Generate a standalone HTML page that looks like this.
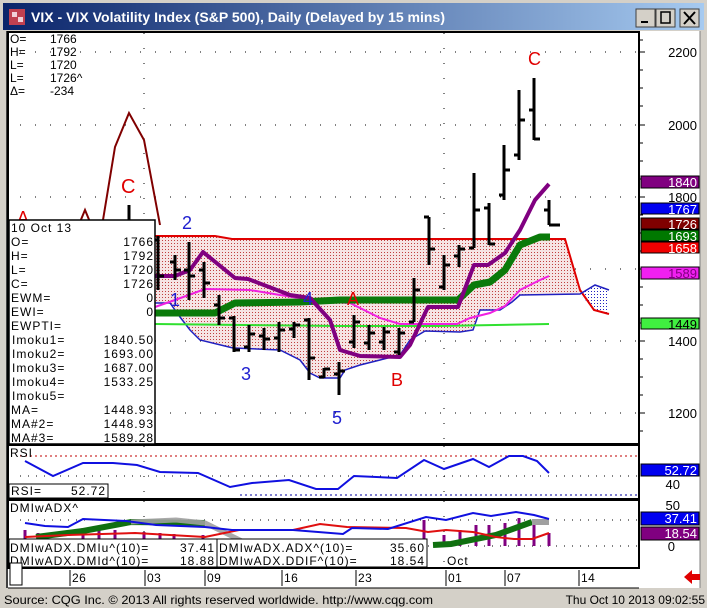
<!DOCTYPE html>
<html><head><meta charset="utf-8"><style>
html,body{margin:0;padding:0;width:707px;height:608px;overflow:hidden;background:#d4d0c8}
svg{display:block}
text{font-family:"Liberation Sans",sans-serif}
</style></head><body>
<svg width="707" height="608" viewBox="0 0 707 608" xmlns="http://www.w3.org/2000/svg">
<defs>
<linearGradient id="tb" x1="0" x2="1" y1="0" y2="0"><stop offset="0" stop-color="#0a246a"/><stop offset="1" stop-color="#a6caf0"/></linearGradient>
<pattern id="pk" width="3" height="3" patternUnits="userSpaceOnUse"><rect width="3" height="3" fill="#f6e4e4"/><rect width="1" height="1" fill="#c04040"/></pattern>
<pattern id="bl" width="3" height="3" patternUnits="userSpaceOnUse"><rect width="3" height="3" fill="#fff"/><rect width="1" height="1" fill="#2020c0"/></pattern>
</defs>
<rect width="707" height="608" fill="#d4d0c8"/>
<rect x="3" y="3" width="701" height="27" fill="url(#tb)"/>
<rect x="9" y="9" width="16" height="16" fill="#c04050"/><rect x="12" y="12" width="5" height="5" fill="#f0d0d8"/><rect x="18" y="17" width="5" height="5" fill="#f0d0d8"/>
<text x="31" y="22" fill="#fff" font-size="13.5" font-weight="bold" textLength="414" lengthAdjust="spacingAndGlyphs">VIX - VIX Volatility Index (S&amp;P 500), Daily (Delayed by 15 mins)</text>
<g fill="#d4d0c8" stroke="#404040"><rect x="636" y="9" width="19" height="18"/><rect x="656" y="9" width="19" height="18"/><rect x="680" y="9" width="19" height="18"/></g>
<rect x="641" y="21" width="7" height="2" fill="#000"/><rect x="661" y="12" width="9" height="11" fill="none" stroke="#000" stroke-width="1.5"/>
<path d="M684 12 L695 24 M695 12 L684 24" stroke="#000" stroke-width="2"/>
<rect x="7" y="31" width="693" height="557" fill="#fff"/>
<rect x="700" y="31" width="7" height="557" fill="#d4d0c8"/>
<line x1="700" y1="31" x2="700" y2="588" stroke="#808080"/>
<line x1="7" y1="31" x2="7" y2="588" stroke="#404040" stroke-width="2"/>
<g stroke="#000" stroke-width="2" fill="none">
<rect x="8" y="32" width="631" height="412"/>
<rect x="8" y="445" width="631" height="54"/>
<rect x="8" y="500" width="631" height="68"/>
</g>
<line x1="8" y1="588" x2="639" y2="588" stroke="#000"/>
<g stroke="#000">
<path d="M639 40h4M639 52h6M639 70h4M639 88h4M639 106h4M639 125h6M639 143h4M639 161h4M639 179h4M639 197h6M639 215h4M639 233h4M639 251h4M639 269h6M639 287h4M639 305h4M639 323h4M639 341h6M639 359h4M639 377h4M639 395h4M639 413h6M639 431h4"/>
</g>
<g stroke="#000" stroke-width="1" stroke-dasharray="1,14" fill="none">
<path d="M20 52H639M20 125H639M20 197H639M20 269H639M20 341H639M20 413H639"/>
<path d="M144 33V443M444 33V443M144 446V498M444 446V498M144 501V567M444 501V567"/>
<path d="M20 476H639M20 520H639M20 546H639" stroke-dasharray="1,7"/>
</g>
<line x1="20" y1="456" x2="639" y2="456" stroke="#c00000" stroke-dasharray="2,3"/>
<line x1="240" y1="495" x2="639" y2="495" stroke="#0000a0" stroke-dasharray="2,3"/>
<polyline points="80,222 85,210 90,222" fill="none" stroke="#800000" stroke-width="2"/>
<polyline points="103,220 115,147 129,113 144,140 160,225" fill="none" stroke="#800000" stroke-width="2"/>
<text x="17" y="224" fill="#e00000" font-size="18">A</text>
<text x="121" y="193" fill="#e00000" font-size="20">C</text>
<line x1="129" y1="205" x2="129" y2="222" stroke="#000" stroke-width="3"/>
<polygon points="155,236 215,236 232,239 565,239 580,294 520,295 512,302 500,310 480,310 473,330 460,332 425,331 410,340 400,355 380,360 360,365 345,370 340,378 320,378 310,373 300,360 280,350 233,348 200,340 190,330 180,317 170,303 155,303" fill="url(#pk)"/>
<polygon points="580,294 595,285 609,290 609,313 594,310" fill="url(#bl)"/>
<polyline points="155,236 215,236 232,239 565,239 580,290 594,310 609,314" fill="none" stroke="#e00000" stroke-width="2"/>
<polyline points="155,303 170,303 180,317 190,330 200,340 233,348 280,350 300,360 310,373 320,378 340,378 345,370 360,365 380,360 400,355 410,340 425,331 460,332 473,330 480,310 500,310 512,302 520,295 580,294 595,285 609,290" fill="none" stroke="#2020c0" stroke-width="1.5"/>
<polyline points="155,324 340,326 440,326 549,324" fill="none" stroke="#30e030" stroke-width="2"/>
<polyline points="155,307 175,300 205,289 250,290 280,295 305,299 330,302 350,303 380,318 400,324 457,324 470,318 490,313 505,306 520,290 540,280 549,276" fill="none" stroke="#f020e0" stroke-width="2"/>
<polyline points="155,313 215,313 235,303 300,302 340,300 458,300 474,285 490,282 505,270 520,245 540,237 550,237" fill="none" stroke="#0a7a0a" stroke-width="7" stroke-linejoin="round"/>
<polyline points="155,276 175,276 190,270 203,252 235,278 248,279 290,295 310,298 330,320 340,350 360,356 400,357 410,345 428,307 458,307 474,265 488,265 505,253 520,230 535,200 549,184" fill="none" stroke="#800080" stroke-width="4" stroke-linejoin="round"/>
<g stroke="#000" stroke-width="3" fill="none">
<path d="M158 236V290M153 240h5M158 276h6"/>
<path d="M175 255V280M170 262h5M175 270h6"/>
<path d="M189 242V300M184 270h5M189 276h6"/>
<path d="M204 262V298M199 270h5M204 283h6"/>
<path d="M219 295V325M214 305h5M219 318h6"/>
<path d="M234 316V352M229 318h5M234 350h6"/>
<path d="M249 325V352M244 347h5M249 334h6"/>
<path d="M264 328V350M259 336h5M264 339h6"/>
<path d="M279 322V352M274 338h5M279 330h6"/>
<path d="M294 322V338M289 329h5M294 325h6"/>
<path d="M309 318V380M304 320h5M309 358h6"/>
<path d="M324 368V378M319 377h5M324 369h6"/>
<path d="M339 362V395M334 374h5M339 371h6"/>
<path d="M354 315V348M349 342h5M354 322h6"/>
<path d="M369 325V350M364 343h5M369 333h6"/>
<path d="M384 327V350M379 342h5M384 332h6"/>
<path d="M399 328V355M394 352h5M399 333h6"/>
<path d="M414 278V322M409 322h5M414 290h6"/>
<path d="M429 217V265M424 217h5M429 249h6"/>
<path d="M444 255V290M439 287h5M444 265h6"/>
<path d="M459 245V267M454 256h5M459 249h6"/>
<path d="M474 173V248M469 248h5M474 210h6"/>
<path d="M489 203V245M484 208h5M489 244h6"/>
<path d="M504 145V200M499 195h5M504 170h6"/>
<path d="M519 90V160M514 155h5M519 120h6"/>
<path d="M534 78V140M529 110h5M534 139h6"/>
<path d="M549 200V225M544 210h5M549 225h11"/>
</g>
<g font-size="18">
<text x="182" y="229" fill="#2020d0">2</text>
<text x="170" y="306" fill="#2020d0">1</text>
<text x="241" y="380" fill="#2020d0">3</text>
<text x="303" y="305" fill="#2020d0">4</text>
<text x="332" y="424" fill="#2020d0">5</text>
<text x="347" y="305" fill="#e00000">A</text>
<text x="391" y="386" fill="#e00000">B</text>
<text x="528" y="65" fill="#e00000">C</text>
</g>
<g font-size="12" fill="#000">
<text x="10" y="43">O=</text><text x="50" y="43">1766</text>
<text x="10" y="56">H=</text><text x="50" y="56">1792</text>
<text x="10" y="69">L=</text><text x="50" y="69">1720</text>
<text x="10" y="82">L=</text><text x="50" y="82">1726^</text>
<text x="10" y="95">Δ=</text><text x="50" y="95">-234</text>
</g>
<rect x="9" y="220" width="146" height="224" fill="#fff" stroke="#000" stroke-width="1.5"/>
<g font-size="12" fill="#000" letter-spacing="1">
<text x="11" y="232">10 Oct 13</text>
<text x="11" y="246">O=</text><text x="11" y="260">H=</text><text x="11" y="274">L=</text><text x="11" y="288">C=</text>
<text x="11" y="302">EWM=</text><text x="11" y="316">EWI=</text><text x="11" y="330">EWPTI=</text>
<text x="12" y="344">Imoku1=</text><text x="12" y="358">Imoku2=</text><text x="12" y="372">Imoku3=</text><text x="12" y="386">Imoku4=</text><text x="12" y="400">Imoku5=</text>
<text x="11" y="414">MA=</text><text x="11" y="428">MA#2=</text><text x="11" y="442">MA#3=</text>
</g>
<g font-size="12" fill="#000" text-anchor="end" letter-spacing="1">
<text x="154" y="246">1766</text><text x="154" y="260">1792</text><text x="154" y="274">1720</text><text x="154" y="288">1726</text>
<text x="154" y="302">0</text><text x="154" y="316">0</text>
<text x="154" y="344">1840.50</text><text x="154" y="358">1693.00</text><text x="154" y="372">1687.00</text><text x="154" y="386">1533.25</text>
<text x="154" y="414">1448.93</text><text x="154" y="428">1448.93</text><text x="154" y="442">1589.28</text>
</g>
<g font-size="13" text-anchor="end">
<text x="697" y="57" fill="#000">2200</text>
<text x="697" y="130" fill="#000">2000</text>
<text x="697" y="202" fill="#000">1800</text>
<text x="697" y="346" fill="#000">1400</text>
<text x="697" y="418" fill="#000">1200</text>
</g>
<g stroke="#000" stroke-width="1">
<rect x="641" y="176" width="58" height="12" fill="#800080"/>
<rect x="641" y="203" width="58" height="11" fill="#0000f0"/>
<rect x="641" y="218" width="58" height="11" fill="#800000"/>
<rect x="641" y="230" width="58" height="11" fill="#007800"/>
<rect x="641" y="242" width="58" height="11" fill="#f00000"/>
<rect x="641" y="267" width="58" height="12" fill="#f020f0"/>
<rect x="641" y="318" width="58" height="11" fill="#40f040"/>
</g>
<g font-size="13" text-anchor="end">
<text x="697" y="187" fill="#fff">1840</text>
<text x="697" y="214" fill="#fff">1767</text>
<text x="697" y="229" fill="#fff">1726</text>
<text x="697" y="241" fill="#fff">1693</text>
<text x="697" y="253" fill="#fff">1658</text>
<text x="697" y="278" fill="#800080">1589</text>
<text x="697" y="329" fill="#000">1449</text>
</g>
<text x="10" y="457" font-size="12" letter-spacing="1">RSI</text>
<polyline points="25,461 53,476 83,463 113,463 137,465 160,472 198,473 230,487 252,483 289,480 316,489 338,489 354,476 397,478 424,460 444,469 473,459 489,467 509,456 523,456 537,461 549,473" fill="none" stroke="#1010e0" stroke-width="2"/>
<rect x="9" y="484" width="99" height="14" fill="#fff" stroke="#000"/>
<text x="11" y="495" font-size="12" letter-spacing="1">RSI=</text><text x="106" y="495" font-size="12" text-anchor="end" letter-spacing="1">52.72</text>
<text x="680" y="475" font-size="13" text-anchor="end">60</text>
<rect x="641" y="464" width="58" height="12" fill="#0000f0" stroke="#000"/>
<text x="697" y="475" font-size="13" text-anchor="end" fill="#fff">52.72</text>
<text x="680" y="489" font-size="13" text-anchor="end">40</text>
<text x="10" y="512" font-size="12" letter-spacing="1">DMIwADX^</text>
<g stroke="#800080" stroke-width="3">
<path d="M25 530V546M38 533V546M83 528V546M99 530V546M115 530V546M144 532V546M160 533V546M174 534V546M203 535V546M424 520V546M444 535V546M460 530V546M476 525V546M489 525V546M505 523V546M519 518V546M534 520V546M549 533V546"/>
</g>
<polyline points="36,537 83,531 131,522 205,523" fill="none" stroke="#107010" stroke-width="6"/>
<polyline points="131,522 176,520 205,523 250,545" fill="none" stroke="#a0a0a0" stroke-width="5" opacity="0.9"/>
<polyline points="433,545 451,544 496,535 532,522" fill="none" stroke="#107010" stroke-width="6"/>
<polyline points="532,522 549,522" fill="none" stroke="#a0a0a0" stroke-width="6"/>
<polyline points="25,537 68,535 135,533 205,537 239,530 293,530 320,524 347,527 406,528 428,532 446,530 473,532 496,537 514,539 532,539 549,533" fill="none" stroke="#e01010" stroke-width="2"/>
<polyline points="25,523 45,526 68,527 83,519 126,521 156,525 205,527 232,530 293,530 343,534 352,528 388,529 426,517 446,520 473,513 491,516 516,512 534,515 549,519" fill="none" stroke="#1010e0" stroke-width="2"/>
<rect x="9" y="539" width="208" height="28" fill="#fff" stroke="#000"/>
<rect x="217" y="539" width="210" height="28" fill="#fff" stroke="#000"/>
<g font-size="12" letter-spacing="1">
<text x="10" y="552">DMIwADX.DMIu^(10)=</text><text x="215" y="552" text-anchor="end">37.41</text>
<text x="10" y="565">DMIwADX.DMId^(10)=</text><text x="215" y="565" text-anchor="end">18.88</text>
<text x="219" y="552">DMIwADX.ADX^(10)=</text><text x="425" y="552" text-anchor="end">35.60</text>
<text x="219" y="565">DMIwADX.DDIF^(10)=</text><text x="425" y="565" text-anchor="end">18.54</text>
<text x="447" y="565">Oct</text>
</g>
<text x="680" y="510" font-size="13" text-anchor="end">50</text>
<rect x="641" y="512" width="58" height="13" fill="#0000f0" stroke="#000"/>
<text x="697" y="523" font-size="13" text-anchor="end" fill="#fff">37.41</text>
<rect x="641" y="527" width="58" height="13" fill="#800080" stroke="#000"/>
<text x="697" y="538" font-size="13" text-anchor="end" fill="#fff">18.54</text>
<text x="675" y="551" font-size="13" text-anchor="end">0</text>
<rect x="10" y="563" width="12" height="22" fill="#fff" stroke="#000"/>
<g stroke="#000"><path d="M70 570V586M145 570V586M205 570V586M282 570V586M356 570V586M446 570V586M505 570V586M579 570V586"/></g>
<g font-size="12" letter-spacing="0.5">
<text x="72" y="582">26</text><text x="147" y="582">03</text><text x="207" y="582">09</text><text x="284" y="582">16</text><text x="358" y="582">23</text><text x="448" y="582">01</text><text x="507" y="582">07</text><text x="581" y="582">14</text>
</g>
<path d="M684 577 L692 570 V574 H700 V580 H692 V584 Z" fill="#e00000"/>
<rect x="0" y="590" width="707" height="18" fill="#d4d0c8"/>
<text x="4" y="604" font-size="12" fill="#000" textLength="429" lengthAdjust="spacingAndGlyphs">Source: CQG Inc. © 2013 All rights reserved worldwide.  http://www.cqg.com</text>
<text x="705" y="604" font-size="12" fill="#000" text-anchor="end">Thu Oct 10 2013 09:02:55</text>
</svg>
</body></html>
